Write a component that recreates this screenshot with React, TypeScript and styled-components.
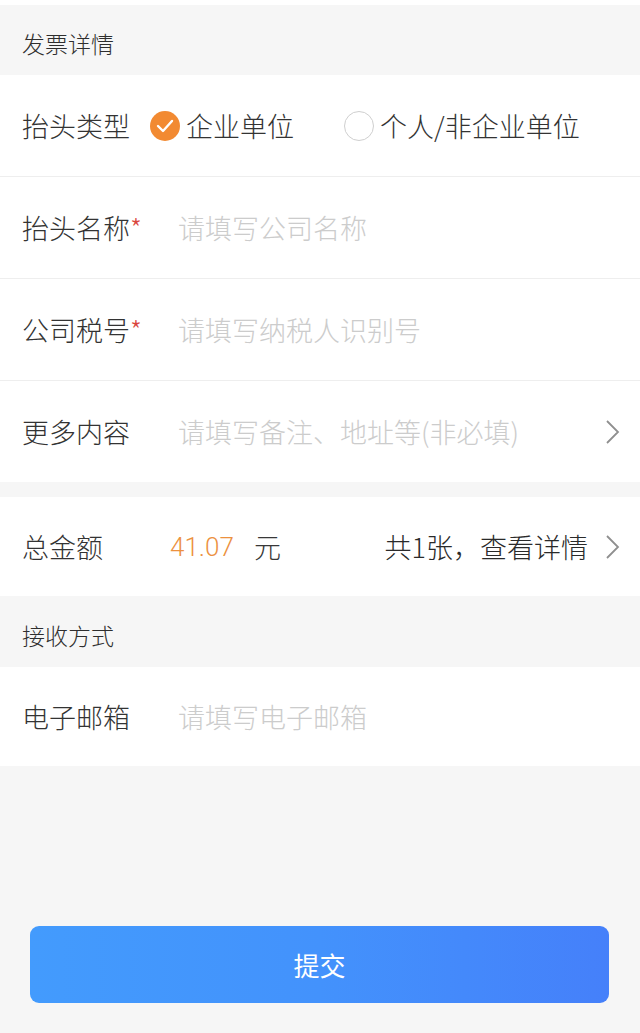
import React, { useState } from 'react';
import styled, { createGlobalStyle } from 'styled-components';

const GlobalStyle = createGlobalStyle`
  html, body {
    margin: 0;
    padding: 0;
    background: #f6f6f6;
    font-family: "Noto Sans CJK SC", "Noto Sans", sans-serif;
    color: #383838;
  }
  * { box-sizing: border-box; }
`;

const Page = styled.div`
  min-height: 100vh;
  display: flex;
  flex-direction: column;
  border-top: 5px solid #fff;
`;

const SectionTitle = styled.div<{ $h: number }>`
  height: ${p => p.$h}px;
  display: flex;
  align-items: center;
  padding: 6px 22px 0;
  font-size: 23px;
  font-weight: 300;
  color: #2e2e2e;
  background: #f6f6f6;
`;

const Row = styled.div<{ $h: number; $line?: boolean }>`
  height: ${p => p.$h + (p.$line ? 1 : 0)}px;
  display: flex;
  align-items: center;
  padding: 0 20px 0 22px;
  background: #fff;
  border-bottom: ${p => (p.$line ? '1px solid #eeeeee' : 'none')};
  font-size: 27px;
  font-weight: 300;
`;

const Label = styled.div<{ $w: number }>`
  width: ${p => p.$w}px;
  flex-shrink: 0;
  color: #333;
  white-space: nowrap;
`;

const Star = styled.span`
  color: #d9453c;
`;

const Input = styled.input`
  flex: 1;
  border: none;
  outline: none;
  background: transparent;
  font: inherit;
  color: #333;
  padding: 0;
  &::placeholder {
    color: #cccccc;
  }
`;

const RadioGroup = styled.div`
  display: flex;
  align-items: center;
  gap: 50px;
`;

const RadioItem = styled.label`
  display: flex;
  align-items: center;
  gap: 6px;
  cursor: pointer;
  color: #333;
`;

const Circle = styled.span<{ $on: boolean }>`
  width: 30px;
  height: 30px;
  border-radius: 50%;
  display: flex;
  align-items: center;
  justify-content: center;
  background: ${p => (p.$on ? '#f28a32' : '#fff')};
  border: ${p => (p.$on ? 'none' : '1.5px solid #cfcfcf')};
`;

const Amount = styled.span`
  color: #ec913f;
  font-family: Roboto, "Noto Sans", sans-serif;
  font-size: 26px;
  font-weight: 300;
  margin-right: 20px;
`;

const Spacer = styled.div`
  flex: 1;
`;

const Detail = styled.span`
  color: #2a2a2a;
  margin-right: 16px;
`;

const Gap = styled.div`
  height: 15px;
`;

const Footer = styled.div`
  margin-top: auto;
  padding: 0 31px 30px 30px;
`;

const Submit = styled.button`
  width: 100%;
  height: 77px;
  border: none;
  border-radius: 9px;
  background: linear-gradient(90deg, #439bfd 0%, #4392fc 50%, #4580fa 100%);
  color: #fff;
  font-family: inherit;
  font-size: 26px;
  cursor: pointer;
`;

const Chevron = () => (
  <svg width="16" height="26" viewBox="0 0 16 26" fill="none">
    <polyline points="3,2 14,13 3,24" stroke="#8f8f8f" strokeWidth="1.8" />
  </svg>
);

const Check = () => (
  <svg width="18" height="14" viewBox="0 0 18 14" fill="none">
    <polyline points="2,7 7,12 16,2" stroke="#fff" strokeWidth="2.4" strokeLinecap="round" strokeLinejoin="round" />
  </svg>
);

export default function App() {
  const [type, setType] = useState<'company' | 'person'>('company');

  return (
    <Page>
      <GlobalStyle />
      <SectionTitle $h={70}>发票详情</SectionTitle>

      <Row $h={101} $line>
        <Label $w={128}>抬头类型</Label>
        <RadioGroup>
          <RadioItem onClick={() => setType('company')}>
            <Circle $on={type === 'company'}>{type === 'company' && <Check />}</Circle>
            企业单位
          </RadioItem>
          <RadioItem onClick={() => setType('person')}>
            <Circle $on={type === 'person'}>{type === 'person' && <Check />}</Circle>
            个人/非企业单位
          </RadioItem>
        </RadioGroup>
      </Row>

      <Row $h={101} $line>
        <Label $w={156}>抬头名称<Star>*</Star></Label>
        <Input placeholder="请填写公司名称" />
      </Row>

      <Row $h={101} $line>
        <Label $w={156}>公司税号<Star>*</Star></Label>
        <Input placeholder="请填写纳税人识别号" />
      </Row>

      <Row $h={101}>
        <Label $w={156}>更多内容</Label>
        <Input placeholder="请填写备注、地址等(非必填)" />
        <Chevron />
      </Row>

      <Gap />

      <Row $h={99}>
        <Label $w={148}>总金额</Label>
        <Amount>41.07</Amount>
        <span>元</span>
        <Spacer />
        <Detail>共1张，查看详情</Detail>
        <Chevron />
      </Row>

      <SectionTitle $h={71}>接收方式</SectionTitle>

      <Row $h={99}>
        <Label $w={156}>电子邮箱</Label>
        <Input placeholder="请填写电子邮箱" />
      </Row>

      <Footer>
        <Submit>提交</Submit>
      </Footer>
    </Page>
  );
}
